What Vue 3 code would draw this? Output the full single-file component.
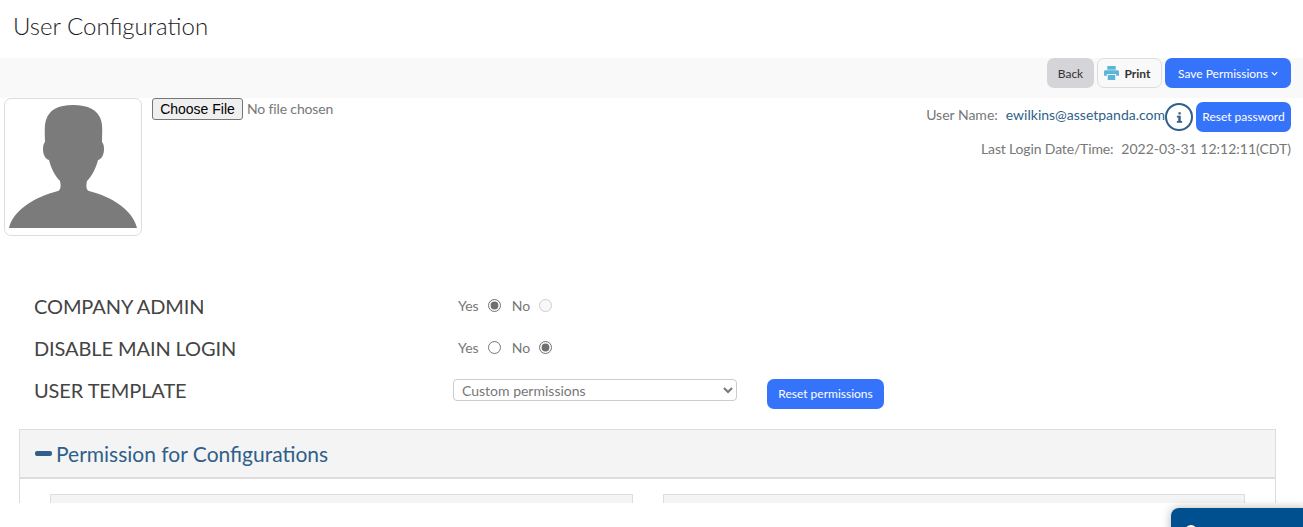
<script setup>
import { ref } from 'vue'

// 表单数据
const companyAdmin = ref('yes')
const disableLogin = ref('no')
const template = ref('custom')
</script>

<template>
  <div class="page">
    <div class="content">
      <h1 class="title">User Configuration</h1>

      <div class="toolbar">
        <button class="btn btn-back">Back</button>
        <button class="btn btn-print">
          <svg class="print-icon" viewBox="0 0 16 15" width="15" height="14">
            <path fill="#5bb5d8" d="M3.500 0h9v4h-9z" />
            <path fill="#5bb5d8" d="M1.500 4.500h13c.8 0 1.500.7 1.500 1.500v4.500h-3V8.500H3v2H0V6c0-.8.7-1.500 1.500-1.500z" />
            <path fill="#5bb5d8" d="M4 9.500h8V15H4z" />
          </svg>
          Print
        </button>
        <button class="btn btn-save">
          Save Permissions
          <svg viewBox="0 0 10 6" width="7" height="5"><path d="M1 1l4 4 4-4" fill="none" stroke="#fff" stroke-width="1.600" /></svg>
        </button>
      </div>

      <div class="profile">
        <div class="avatar">
          <svg viewBox="0 0 130 130" width="130" height="130">
            <path fill="#7b7b7b" d="M1 126C5 108 27 95 50 89c3-1 3-6 2-10-5-5-9-13-11-21-4-1-6-6-6-11 0-4 1-6 2-7 0-7-1-16 1-22C41 8 50 3 65 3s25 5 28 15c2 6 1 15 1 22 1 1 2 3 2 7 0 5-2 10-6 11-2 8-6 16-11 21-1 4-1 9 2 10 23 6 44 19 48 37z" />
          </svg>
        </div>
        <div class="file-wrap">
          <button class="file-btn">Choose File</button>
          <span class="file-text">No file chosen</span>
        </div>
        <div class="user-info">
          <div class="info-line">
            <span class="info-label">User Name:</span>
            <span class="info-email">ewilkins@assetpanda.com</span>
            <span class="info-icon">
              <svg viewBox="0 0 8 12" width="7" height="11">
                <path fill="#2f5f8a" d="M2.800 0h2.600v2.500H2.800zM1 4h4.400v6H7v2H1v-2h1.600V6H1z" />
              </svg>
            </span>
            <button class="btn btn-reset-pass">Reset password</button>
          </div>
          <div class="login-line">
            <span class="login-label">Last Login Date/Time:</span>
            <span>2022-03-31 12:12:11(CDT)</span>
          </div>
        </div>
      </div>

      <div class="settings">
        <div class="setting-row">
          <div class="setting-label">COMPANY ADMIN</div>
          <div class="setting-value">
            <span>Yes</span>
            <input v-model="companyAdmin" type="radio" value="yes" class="radio" />
            <span>No</span>
            <input v-model="companyAdmin" type="radio" value="no" class="radio" disabled />
          </div>
        </div>
        <div class="setting-row">
          <div class="setting-label">DISABLE MAIN LOGIN</div>
          <div class="setting-value">
            <span>Yes</span>
            <input v-model="disableLogin" type="radio" value="yes" class="radio" />
            <span>No</span>
            <input v-model="disableLogin" type="radio" value="no" class="radio" />
          </div>
        </div>
        <div class="setting-row template-row">
          <div class="setting-label">USER TEMPLATE</div>
          <select v-model="template" class="template-select">
            <option value="custom">Custom permissions</option>
          </select>
          <button class="btn btn-reset-perm">Reset permissions</button>
        </div>
      </div>

      <div class="panel">
        <div class="panel-header">
          <span class="minus"></span>
          <span class="panel-title">Permission for Configurations</span>
        </div>
        <div class="panel-body">
          <div class="card"></div>
          <div class="card"></div>
        </div>
      </div>
    </div>

    <div class="chat-tab">
      <span class="chat-dot"></span>
    </div>
  </div>
</template>

<style>
html,
body {
  margin: 0;
  background: #fff;
}
</style>

<style scoped>
.page {
  position: relative;
  width: 1303px;
  height: 527px;
  overflow: hidden;
  background: #fff;
  font-family: Lato, "Liberation Sans", sans-serif;
  color: #777;
}

.content {
  height: 503px;
  overflow: hidden;
}

.title {
  margin: 0;
  height: 58px;
  padding: 11px 0 0 13px;
  box-sizing: border-box;
  font-size: 24px;
  line-height: 30px;
  font-weight: 300;
  color: #1c1c1c;
}

.toolbar {
  height: 40px;
  background: #f9f9f9;
  display: flex;
  justify-content: flex-end;
  align-items: flex-start;
  gap: 3px;
  padding-right: 12px;
}

.btn {
  font-family: Lato, "Liberation Sans", sans-serif;
  border: none;
  border-radius: 7px;
  font-size: 12px;
  cursor: pointer;
  padding: 0;
}

.btn-back {
  width: 47px;
  height: 30px;
  background: #d5d5d9;
  color: #333;
}

.btn-print {
  width: 65px;
  height: 30px;
  padding-right: 4px;
  background: #f9f9f9;
  border: 1px solid #ddd;
  color: #333;
  font-weight: 700;
  display: flex;
  align-items: center;
  justify-content: center;
  gap: 5px;
}

.btn-save {
  width: 126px;
  height: 30px;
  background: #3673fb;
  color: #fff;
  display: flex;
  align-items: center;
  justify-content: center;
  gap: 3px;
}

.profile {
  display: flex;
  height: 187px;
  padding-left: 4px;
}

.avatar {
  width: 138px;
  height: 138px;
  box-sizing: border-box;
  border: 1px solid #ddd;
  border-radius: 7px;
  padding: 3px;
  display: flex;
}

.file-wrap {
  margin-left: 10px;
  display: flex;
  align-items: flex-start;
}

.file-btn {
  width: 91px;
  height: 22px;
  box-sizing: border-box;
  padding: 0;
  border: 1px solid #767676;
  border-radius: 3px;
  background: #efefef;
  color: #000;
  font-family: "Liberation Sans", sans-serif;
  font-size: 14px;
}

.file-text {
  margin-left: 4px;
  font-size: 14px;
  line-height: 22px;
  letter-spacing: -0.15px;
}

.user-info {
  margin-left: auto;
  padding-right: 12px;
  display: flex;
  flex-direction: column;
  align-items: flex-end;
  font-size: 14px;
}

.info-line {
  height: 30px;
  margin-top: 4px;
  display: flex;
  align-items: flex-start;
}

.info-label {
  margin-right: 8px;
  line-height: 26px;
}

.info-email {
  color: #2f5f8a;
  line-height: 26px;
}

.info-icon {
  width: 28px;
  height: 28px;
  box-sizing: border-box;
  margin: 1px 3px 0 0;
  border: 2px solid #2f5f8a;
  border-radius: 50%;
  display: flex;
  align-items: center;
  justify-content: center;
}

.btn-reset-pass {
  width: 95px;
  height: 30px;
  padding-bottom: 2px;
  background: #3673fb;
  color: #fff;
}

.login-line {
  margin-top: 5px;
  display: flex;
  gap: 8px;
  line-height: 24px;
}

.login-label {
  letter-spacing: -0.15px;
}

.settings {
  height: 145px;
  display: flex;
  flex-direction: column;
  padding-left: 34px;
}

.setting-row {
  height: 42px;
  display: flex;
  align-items: center;
}

.setting-label {
  width: 424px;
  font-size: 20px;
  color: #444;
  letter-spacing: -0.1px;
}

.setting-value {
  display: flex;
  align-items: center;
  font-size: 14px;
  margin-top: -2px;
}

.radio {
  margin: 0 11px 0 9px;
  width: 13px;
  height: 13px;
  accent-color: #6f6f6f;
}

.template-row {
  align-items: flex-start;
}

.template-row .setting-label {
  width: 419px;
  line-height: 42px;
}

.template-select {
  width: 284px;
  height: 22px;
  margin-top: 10px;
  font-family: Lato, "Liberation Sans", sans-serif;
  font-size: 14px;
  color: #777;
  background: #fff;
  border: 1px solid #ccc;
  border-radius: 4px;
  padding-left: 4px;
}

.btn-reset-perm {
  width: 117px;
  height: 30px;
  margin: 10px 0 0 30px;
  padding-bottom: 2px;
  background: #3673fb;
  color: #fff;
}

.panel {
  margin: -1px 27px 0 19px;
  height: 101px;
  box-sizing: border-box;
  border: 1px solid #ddd;
}

.panel-header {
  height: 49px;
  box-sizing: border-box;
  background: #f4f4f4;
  border-bottom: 2px solid #ddd;
  display: flex;
  align-items: center;
  padding-left: 15px;
  gap: 4px;
}

.minus {
  width: 17px;
  height: 5px;
  border-radius: 2px;
  background: #2f5f8a;
}

.panel-title {
  font-size: 21px;
  color: #2f5f8a;
}

.panel-body {
  display: flex;
  gap: 30px;
  padding: 15px 30px 0;
}

.card {
  flex: 1;
  height: 60px;
  box-sizing: border-box;
  background: #f4f4f4;
  border: 1px solid #ddd;
}

.chat-tab {
  position: absolute;
  left: 1171px;
  top: 508px;
  width: 140px;
  height: 40px;
  background: #00508f;
  border-radius: 8px 8px 0 0;
  box-shadow: 0 0 10px rgba(0, 0, 0, 0.3);
}

.chat-dot {
  position: absolute;
  left: 14px;
  top: 17px;
  width: 12px;
  height: 12px;
  border-radius: 50%;
  background: #fff;
}
</style>
